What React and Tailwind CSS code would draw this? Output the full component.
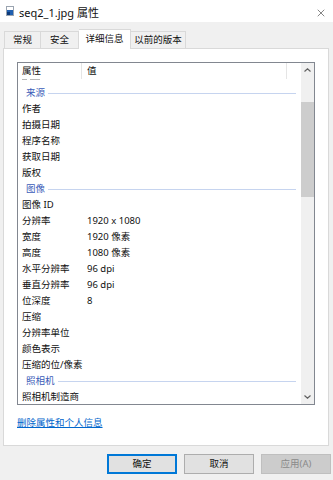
import { X } from 'lucide-react';

const rows = [
    { section: '来源' },
    { label: '作者' },
    { label: '拍摄日期' },
    { label: '程序名称' },
    { label: '获取日期' },
    { label: '版权' },
    { section: '图像' },
    { label: '图像 ID' },
    { label: '分辨率', value: '1920 x 1080' },
    { label: '宽度', value: '1920 像素' },
    { label: '高度', value: '1080 像素' },
    { label: '水平分辨率', value: '96 dpi' },
    { label: '垂直分辨率', value: '96 dpi' },
    { label: '位深度', value: '8' },
    { label: '压缩' },
    { label: '分辨率单位' },
    { label: '颜色表示' },
    { label: '压缩的位/像素' },
    { section: '照相机' },
    { label: '照相机制造商' },
];

function FileIcon() {
    return (
        <svg width="8" height="10" viewBox="0 0 8 10" className="shrink-0">
            <rect x="0.5" y="0.5" width="7" height="9" fill="#ffffff" stroke="#9aa4b0" />
            <rect x="1" y="4" width="6" height="5" fill="#1f5fb0" />
            <rect x="1" y="6" width="3" height="3" fill="#0b3a7a" />
        </svg>
    );
}

export default function App() {
    return (
        <div className="w-[333px] h-[480px] bg-[#f0f0f0] overflow-hidden text-[9.5px] text-[#111111] flex flex-col" style={{ fontFamily: '"Noto Sans", "Noto Sans CJK SC", sans-serif' }}>
            {/* Title bar */}
            <div className="h-[22px] bg-white flex items-center pl-[6px] pr-[6px] shrink-0">
                <FileIcon />
                <span className="ml-[5px] text-[11px] leading-none mt-[2px]">seq2_1.jpg 属性</span>
                <X className="ml-auto mt-[4px]" size={12} strokeWidth={1.2} color="#333" />
            </div>

            {/* Tabs */}
            <div className="h-[26px] flex items-end pl-[4px] shrink-0 relative z-10">
                <div className="h-[17px] w-[37px] border border-b-0 border-[#d9d9d9] bg-[#f0f0f0] flex items-center justify-center leading-none">常规</div>
                <div className="h-[17px] w-[38px] border border-l-0 border-b-0 border-[#d9d9d9] bg-[#f0f0f0] flex items-center justify-center leading-none">安全</div>
                <div className="h-[20px] w-[52px] border border-l-0 border-b-0 border-[#d9d9d9] bg-white -mb-[1px] flex items-start pt-[4px] justify-center leading-none">详细信息</div>
                <div className="h-[17px] w-[55px] border border-l-0 border-b-0 border-[#d9d9d9] bg-[#f0f0f0] flex items-center justify-center leading-none">以前的版本</div>
            </div>

            {/* Panel */}
            <div className="ml-[3px] mr-[4px] h-[398px] border border-[#d9d9d9] bg-white shrink-0 pt-[13px] pl-[13px]">
                <div className="w-[298px] h-[343px] border border-[#828790] flex">
                    <div className="flex-1 flex flex-col overflow-hidden">
                        {/* Header */}
                        <div className="h-[16px] flex items-center shrink-0 leading-none">
                            <div className="w-[64px] pl-[4px] h-full flex items-center border-r border-[#e5e5e5]">属性</div>
                            <div className="w-[205px] pl-[5px] h-full flex items-center border-r border-[#e5e5e5]">值</div>
                        </div>
                        {/* Rows */}
                        <div className="flex-1 overflow-hidden">
                            <div className="h-[6px] flex items-start pl-[4px] gap-[3px]">
                                <div className="w-[5px] h-px bg-[#b8b8b8]" />
                                <div className="w-[10px] h-px bg-[#b8b8b8]" />
                            </div>
                            {rows.map((r, i) =>
                                r.section ? (
                                    <div key={i} className="h-[16px] flex items-center pl-[8px] pr-[5px] leading-none">
                                        <span className="text-[#3b5cb8]">{r.section}</span>
                                        <div className="flex-1 h-px bg-[#c6d4ef] ml-[3px]" />
                                    </div>
                                ) : (
                                    <div key={i} className="h-[16px] flex items-center leading-none">
                                        <div className="w-[69px] pl-[4px] whitespace-nowrap">{r.label}</div>
                                        <div className="whitespace-nowrap">{r.value}</div>
                                    </div>
                                )
                            )}
                        </div>
                    </div>
                    {/* Scrollbar */}
                    <div className="w-[13px] bg-[#f0f0f0] flex flex-col items-center shrink-0">
                        <div className="h-[14px] flex items-center justify-center">
                            <svg width="7" height="4" viewBox="0 0 7 4"><path d="M0.5 3.5 L3.5 0.8 L6.5 3.5" fill="none" stroke="#606060" strokeWidth="1.2" /></svg>
                        </div>
                        <div className="mt-[25px] w-full h-[95px] bg-[#cdcdcd]" />
                        <div className="mt-auto h-[14px] flex items-center justify-center">
                            <svg width="7" height="4" viewBox="0 0 7 4"><path d="M0.5 0.5 L3.5 3.2 L6.5 0.5" fill="none" stroke="#606060" strokeWidth="1.2" /></svg>
                        </div>
                    </div>
                </div>
                <div className="mt-[11px] leading-[14px] text-[#0066cc] underline underline-offset-1">删除属性和个人信息</div>
            </div>

            {/* Buttons */}
            <div className="flex justify-end gap-[7px] pr-[2px] mt-[8px]">
                <button className="w-[70px] h-[20px] bg-[#e1e1e1] border-[2px] border-[#0078d7] leading-none">确定</button>
                <button className="w-[70px] h-[20px] bg-[#e1e1e1] border border-[#adadad] leading-none">取消</button>
                <button className="w-[70px] h-[20px] bg-[#cccccc] border border-[#bfbfbf] text-[#8a8a8a] leading-none">应用(A)</button>
            </div>
        </div>
    );
}
